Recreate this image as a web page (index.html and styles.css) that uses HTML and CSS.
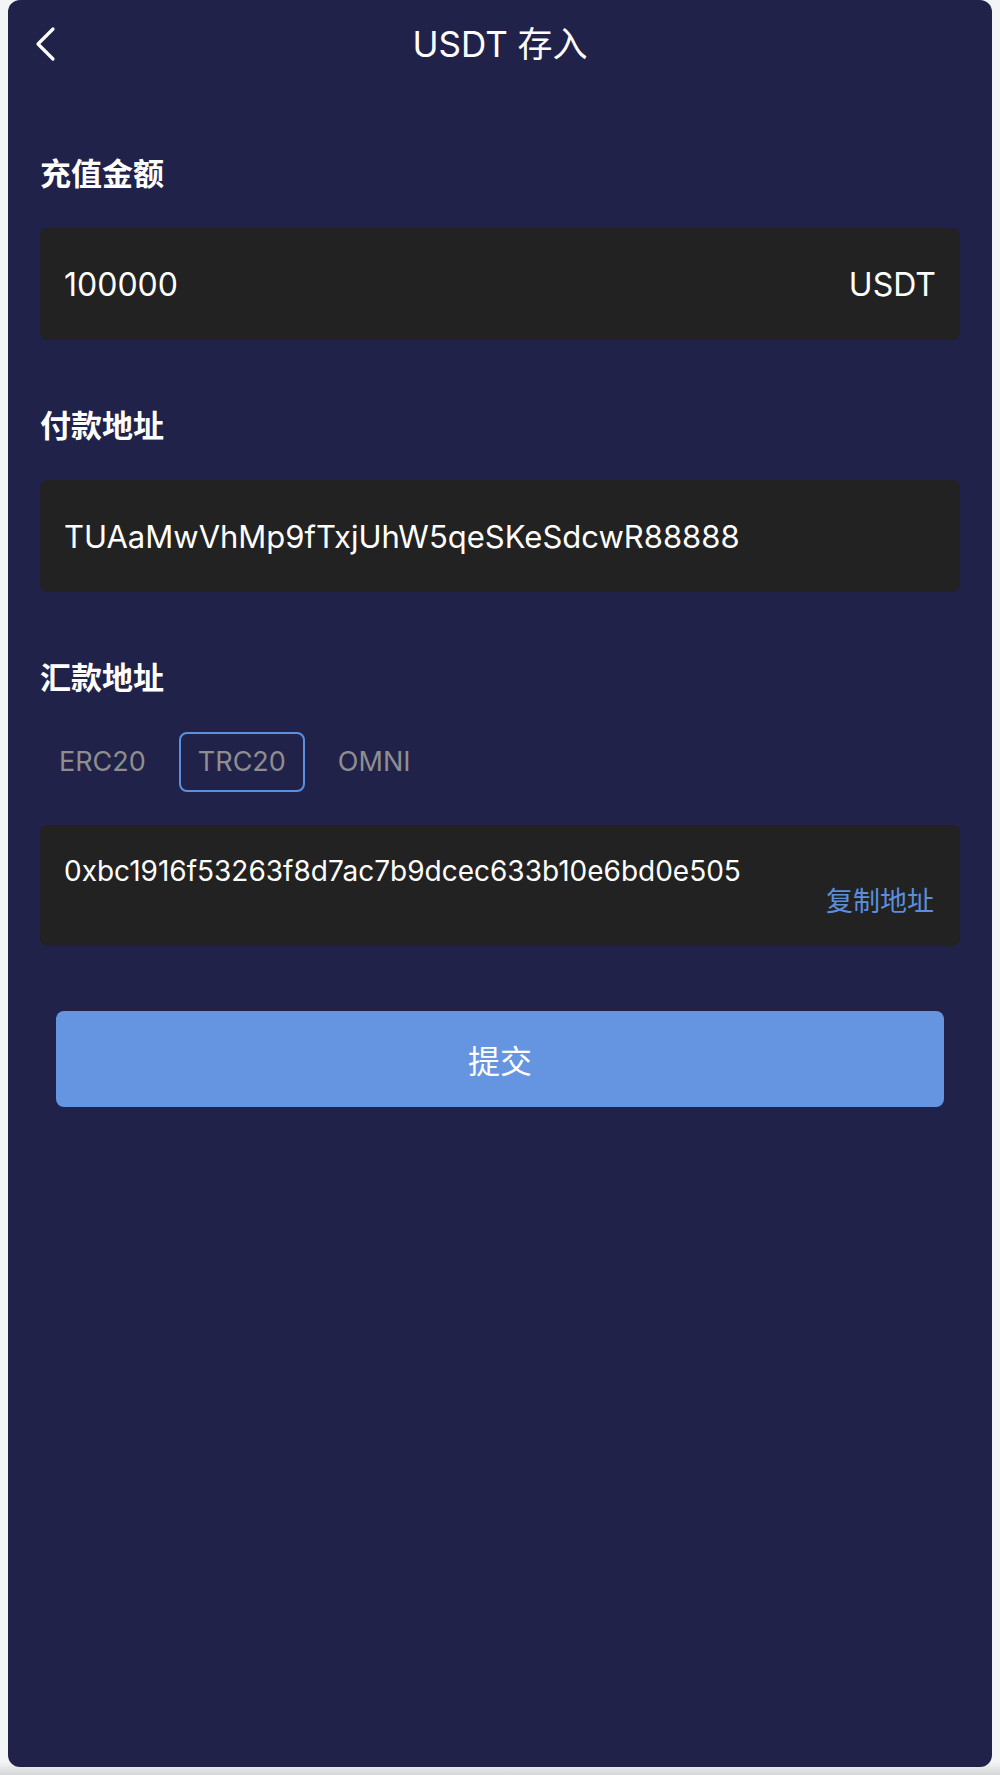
FILE: index.html
```html
<!DOCTYPE html>
<html lang="zh-CN">
<head>
    <meta charset="UTF-8">
    <meta name="viewport" content="width=device-width, initial-scale=1.0">
    <title>USDT 存入</title>
    <link rel="stylesheet" href="styles.css">
</head>
<body>
    <div class="page">
        <div class="nav-bar">
            <a href="#" class="back-btn">
                <svg width="22" height="36" viewBox="0 0 22 36">
                    <path d="M19 3 L4 18 L19 33" fill="none" stroke="#fff" stroke-width="3.2" stroke-linecap="round" stroke-linejoin="round"/>
                </svg>
            </a>
            <div class="nav-title">USDT 存入</div>
            <div></div>
        </div>

        <div class="content">
            <div class="form-group">
                <div class="form-label">充值金额</div>
                <div class="field field-amount">
                    <span class="amount-value">100000</span>
                    <span class="amount-unit">USDT</span>
                </div>
            </div>

            <div class="form-group">
                <div class="form-label">付款地址</div>
                <div class="field field-address">TUAaMwVhMp9fTxjUhW5qeSKeSdcwR88888</div>
            </div>

            <div class="form-group">
                <div class="form-label">汇款地址</div>
                <div class="chain-tabs">
                    <span class="chain-tab">ERC20</span>
                    <span class="chain-tab active">TRC20</span>
                    <span class="chain-tab">OMNI</span>
                </div>
                <div class="field field-receive">
                    <div class="receive-hash">0xbc1916f53263f8d7ac7b9dcec633b10e6bd0e505</div>
                    <div class="copy-link">复制地址</div>
                </div>
            </div>

            <button class="submit-btn">提交</button>
        </div>
    </div>
</body>
</html>
```

FILE: styles.css
```css
* {
    margin: 0;
    padding: 0;
    box-sizing: border-box;
}

body {
    font-family: Inter, 'Noto Sans CJK SC', sans-serif;
    background: linear-gradient(to bottom, #f3f4f6 0, #f3f4f6 1762px, #d5d6d8 1775px);
    padding: 0 8px 8px;
    color: #fff;
}

.page {
    background: #21224a;
    height: 1767px;
    border-radius: 12px;
}

/* 顶部导航 */
.nav-bar {
    display: grid;
    grid-template-columns: 1fr auto 1fr;
    align-items: center;
    height: 88px;
    padding: 0 26px;
}

.back-btn {
    display: flex;
    align-items: center;
    width: 40px;
    height: 40px;
}

.nav-title {
    font-size: 35px;
    line-height: 44px;
}

.content {
    padding: 0 32px;
}

.form-group {
    padding-top: 64px;
}

.form-label {
    font-size: 31px;
    font-weight: bold;
    line-height: 44px;
    margin-bottom: 32px;
}

.field {
    background: #222222;
    border-radius: 8px;
}

.field-amount {
    display: flex;
    justify-content: space-between;
    align-items: center;
    height: 112px;
    padding: 0 24px;
}

.amount-value {
    font-size: 32px;
}

.amount-unit {
    font-size: 32px;
}

.field-address {
    display: flex;
    align-items: center;
    height: 112px;
    padding: 0 24px;
    font-size: 31px;
}

/* 链类型切换 */
.chain-tabs {
    display: flex;
    gap: 14px;
    margin-top: 6px;
    margin-bottom: 33px;
}

.chain-tab {
    font-size: 27px;
    line-height: 56px;
    padding: 0 17px;
    border: 2px solid transparent;
    border-radius: 8px;
    color: #8e8e8e;
}

.chain-tab.active {
    border-color: #5b8fe0;
}

.field-receive {
    height: 121px;
    padding: 26px 26px 0 24px;
}

.receive-hash {
    font-size: 28px;
    line-height: 40px;
}

.copy-link {
    font-size: 27px;
    line-height: 22px;
    text-align: right;
    color: #5b8fdc;
}

.submit-btn {
    display: block;
    width: calc(100% - 32px);
    height: 96px;
    margin: 65px auto 0;
    border: none;
    border-radius: 8px;
    background: #6595e0;
    color: #fff;
    font-family: Inter, 'Noto Sans CJK SC', sans-serif;
    font-size: 32px;
    cursor: pointer;
}
```
